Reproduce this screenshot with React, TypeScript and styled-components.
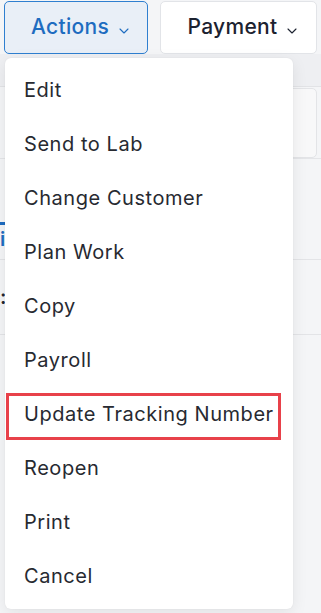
import React from "react";
import styled, { createGlobalStyle } from "styled-components";

const GlobalStyle = createGlobalStyle`
  html, body {
    margin: 0;
    padding: 0;
    background: #f4f5f7;
    font-family: Inter, "Noto Sans", sans-serif;
  }
`;

const actions = [
  "Edit",
  "Send to Lab",
  "Change Customer",
  "Plan Work",
  "Copy",
  "Payroll",
  "Update Tracking Number",
  "Reopen",
  "Print",
  "Cancel",
];

const Chevron = () => (
  <svg width="10" height="6" viewBox="0 0 10 6" fill="none">
    <path d="M1 1l4 4 4-4" stroke="currentColor" strokeWidth="1.1" strokeLinecap="round" strokeLinejoin="round" />
  </svg>
);

const App = () => {
  return (
    <>
      <GlobalStyle />
      <St.Page>
        <St.Toolbar>
          <St.Anchor>
            <St.Button $active>
              Actions <Chevron />
            </St.Button>
            <St.Menu>
              {actions.map((a) => (
                <St.Item key={a} $marked={a === "Update Tracking Number"}>
                  {a}
                </St.Item>
              ))}
            </St.Menu>
          </St.Anchor>
          <St.Button>
            Payment <Chevron />
          </St.Button>
        </St.Toolbar>
        <St.Band />
        <St.CardRow>
          <St.SideCard />
        </St.CardRow>
        <St.TabRow>
          <St.Tab>i</St.Tab>
        </St.TabRow>
        <St.FieldRow>
          <St.Field>:</St.Field>
        </St.FieldRow>
      </St.Page>
    </>
  );
};

export default App;

const St = {
  Page: styled.div`
    width: 321px;
    height: 613px;
    overflow: hidden;
    position: relative;
  `,
  Toolbar: styled.div`
    display: flex;
    gap: 12px;
    padding: 1px 4px 0 4px;
    height: 53px;
  `,
  Anchor: styled.div`
    position: relative;
  `,
  Button: styled.button<{ $active?: boolean }>`
    display: flex;
    align-items: center;
    justify-content: center;
    gap: 10px;
    height: 53px;
    width: ${(p) => (p.$active ? "144px" : "158px")};
    box-sizing: border-box;
    border-radius: 5px;
    border: 1px solid ${(p) => (p.$active ? "#2f7fd0" : "#e2e4e8")};
    background: ${(p) => (p.$active ? "#e9eff7" : "#ffffff")};
    color: ${(p) => (p.$active ? "#1e6cc0" : "#1c2230")};
    font-family: Inter, "Noto Sans", sans-serif;
    font-size: 21px;
    font-weight: 500;
    letter-spacing: 0.3px;
    padding: 0 0 2px 8px;
    svg {
      margin-top: 9px;
    }
  `,
  Menu: styled.div`
    position: absolute;
    top: 57px;
    left: 1px;
    width: 288px;
    box-sizing: border-box;
    padding: 5px 0 6px;
    background: #ffffff;
    border-radius: 6px;
    box-shadow: 0 4px 16px rgba(0, 0, 0, 0.08), 0 0 2px rgba(0, 0, 0, 0.06);
    z-index: 10;
  `,
  Item: styled.div<{ $marked?: boolean }>`
    position: relative;
    height: 54px;
    display: flex;
    align-items: center;
    padding-left: 19px;
    font-size: 20px;
    letter-spacing: 0.55px;
    color: #272a31;
    &::after {
      content: "";
      display: ${(p) => (p.$marked ? "block" : "none")};
      position: absolute;
      left: 1px;
      right: 12px;
      top: 6px;
      bottom: 1px;
      border: 3.5px solid #e8414a;
    }
  `,
  Band: styled.div`
    height: 32px;
    background: #eeeff2;
    border-bottom: 1px solid #e2e3e6;
  `,
  CardRow: styled.div`
    display: flex;
    justify-content: flex-end;
    padding: 1px 4px 0 0;
    height: 70px;
    border-bottom: 1px solid #e4e5e8;
  `,
  SideCard: styled.div`
    width: 40px;
    height: 68px;
    background: #f8f8f9;
    border: 1px solid #e3e4e7;
    border-radius: 5px;
  `,
  TabRow: styled.div`
    margin-top: 55px;
    height: 45px;
    border-bottom: 1px solid #e3e4e7;
    display: flex;
    align-items: center;
  `,
  Tab: styled.div`
    color: #1e6cc0;
    font-size: 20px;
    font-weight: 600;
    border-top: 3px solid #1e6cc0;
    padding: 2px 2px 0 0;
  `,
  FieldRow: styled.div`
    height: 74px;
    border-bottom: 1px solid #e3e4e7;
    display: flex;
    align-items: center;
  `,
  Field: styled.div`
    color: #23262d;
    font-size: 20px;
    font-weight: 600;
  `,
};
